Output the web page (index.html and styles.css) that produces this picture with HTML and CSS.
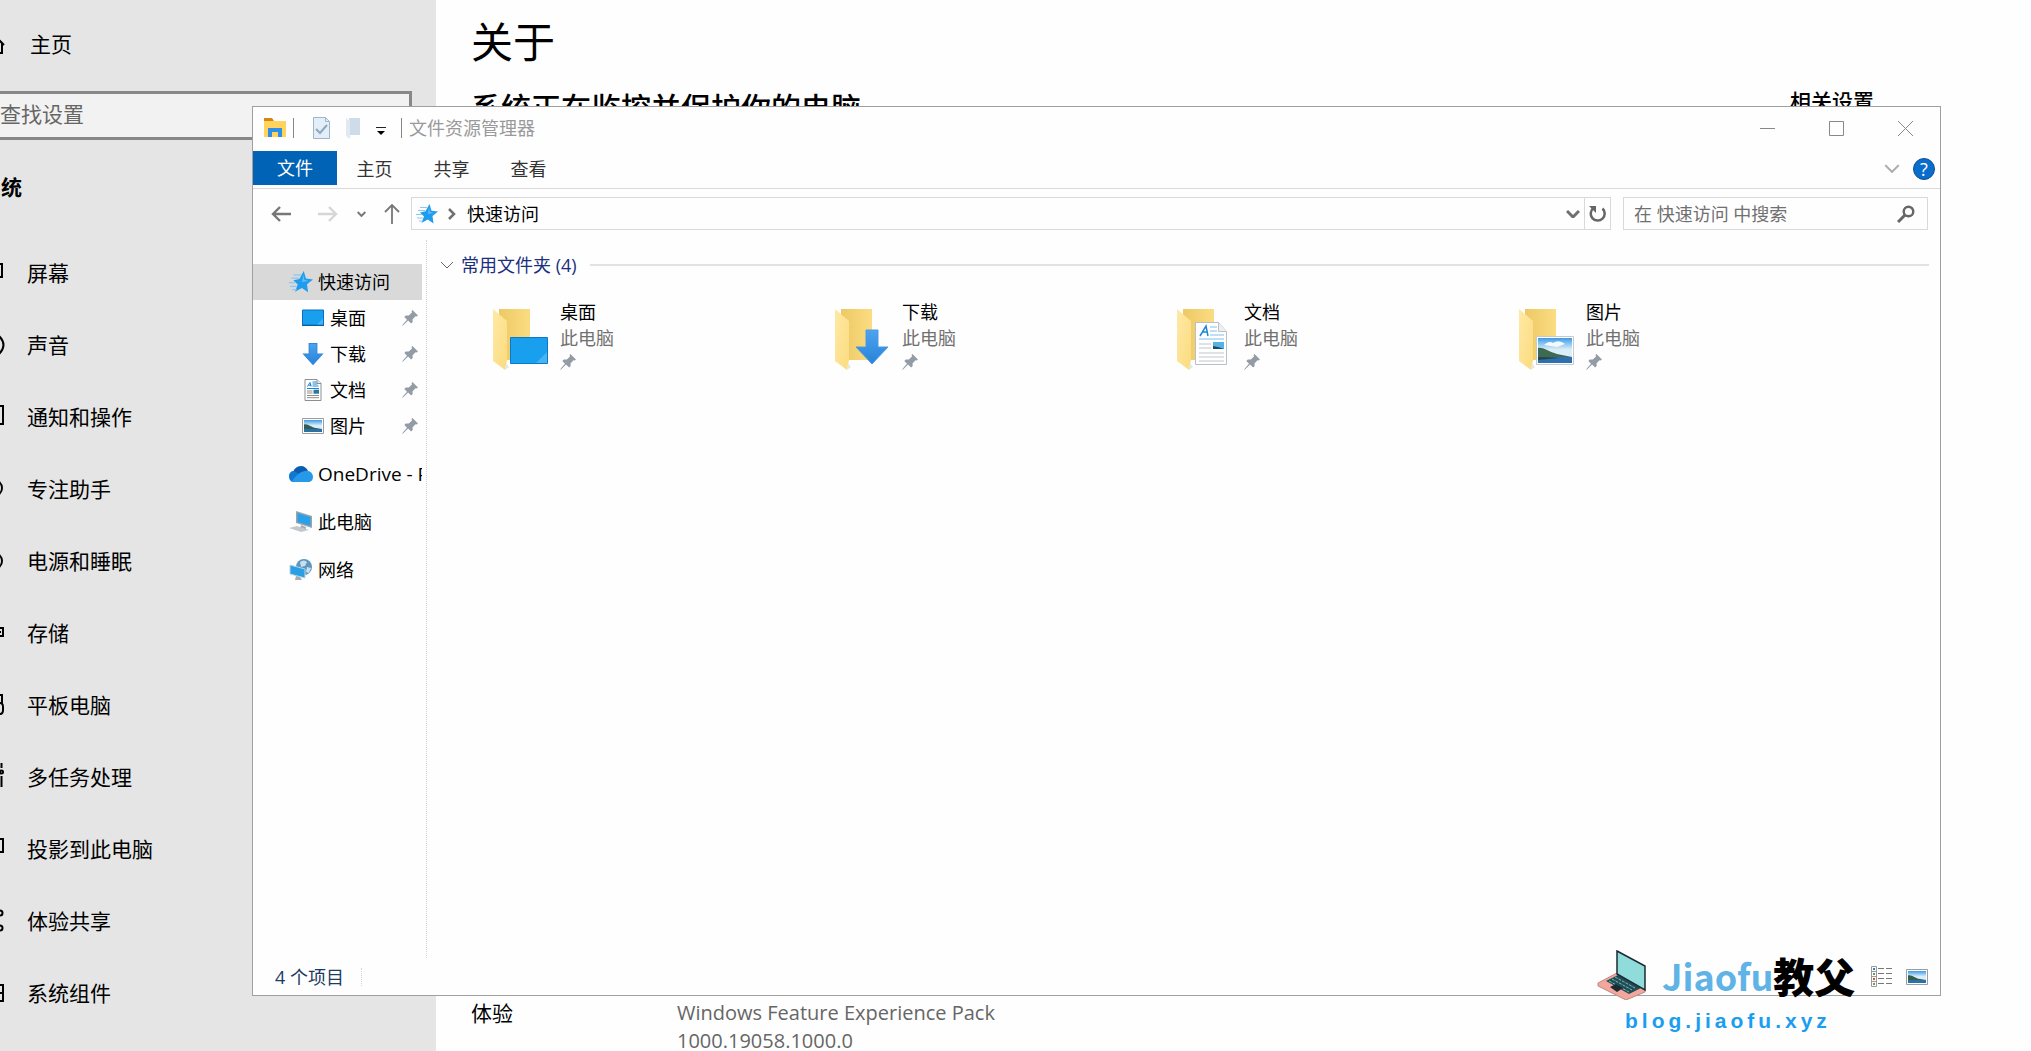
FILE: index.html
```html
<!DOCTYPE html>
<html lang="zh-CN">
<head>
<meta charset="utf-8">
<title>文件资源管理器</title>
<link rel="stylesheet" href="styles.css">
</head>
<body>
<svg class="sprite" aria-hidden="true">
  <defs>
    <linearGradient id="sky" x1="0" y1="0" x2="0" y2="1"><stop offset="0" stop-color="#3d9be6"/><stop offset=".45" stop-color="#d8ecf8"/><stop offset="1" stop-color="#e8f3fa"/></linearGradient>
    <linearGradient id="arrow" x1="0" y1="0" x2="0" y2="1"><stop offset="0" stop-color="#4ba3f0"/><stop offset="1" stop-color="#2a82da"/></linearGradient>
    <linearGradient id="fold" x1="0" y1="0" x2="1" y2="1"><stop offset="0" stop-color="#ffe9a6"/><stop offset="1" stop-color="#fbdb7e"/></linearGradient>
    <linearGradient id="foldback" x1="0" y1="0" x2="1" y2="0"><stop offset="0" stop-color="#edc964"/><stop offset="1" stop-color="#fbdc82"/></linearGradient>
  </defs>
  <symbol id="pin" viewBox="0 0 16 16"><path d="M10.500 0 16 5.500l-1.500 1-1-.3-3 3.200.2 2.600-1.600 1.600-3-3L1.500 15 0 16l1-1.800 4-4.400L2.300 7l1.500-1.500 3 .1L10 2.600 9.600 1z" fill="#939ca5"/></symbol>
  <symbol id="star" viewBox="0 0 22 20"><path d="M13.500 0 15.500 6.800 22 7.600 16.500 12 17.500 19.500 11.800 15.400 5.500 19 8 12.400 4 8.500 9.500 7.200z" fill="#1e9cee"/><path d="M4 3.500h7M2 6.500h7M0 10.500h6M1 14h6M3 17h4" stroke="#8cc8f1" stroke-width="1.200"/><path d="m13 3 1 5 4 1-6 1z" fill="#5fbdf8"/></symbol>
  <symbol id="desktop" viewBox="0 0 22 17"><path d="M.5.5h21v15H.5z" fill="#18a0ee" stroke="#0b6fc0"/><path d="M15 15 21 9v6z" fill="#45b3f2"/><path d="M0 16h22" stroke="#0a5ea8"/></symbol>
  <symbol id="down" viewBox="0 0 18 20"><path d="M5.500.5h7v9.500h5L9 19.500.5 10h5z" fill="url(#arrow)" stroke="#2f86da"/></symbol>
  <symbol id="doc" viewBox="0 0 17 22"><path d="M.5.5h12l4 4v17H.5z" fill="#fff" stroke="#8b9095"/><path d="M12.500.5v4h4" fill="#e6e9ec" stroke="#8b9095"/><path d="m3 7.500 2.500-4 1 4M4 6.200h3M8 3h4M8 5h5M8 7h6M2.500 9.500h12" stroke="#1b86d4" fill="none"/><path d="M2.500 12h5.500M2.500 14h5.500M2.500 16.500h12M2.500 18.700h12" stroke="#8d8f86"/><path d="M9 10.700h5.500v4H9z" fill="#2c75a0"/></symbol>
  <symbol id="photo" viewBox="0 0 22 16"><path d="M.5.5h21v15H.5z" fill="#fff" stroke="#9a9da1"/><path d="M2 2h18v12H2z" fill="url(#sky)"/><path d="M2 6.500c4-1 7 3 12 3.500l6 1H2z" fill="#365c50"/><path d="M2 11h18v3H2z" fill="#2c70a8"/></symbol>
  <symbol id="folder" viewBox="0 0 56 62"><path d="M6 0h31v51H6z" fill="url(#foldback)"/><path d="M0 0 14 12v39l-2 10L0 52z" fill="url(#fold)"/><path d="m12 61 4-3-3-4z" fill="#e6e6e6"/></symbol>
  <symbol id="chev" viewBox="0 0 14 8"><path d="m1 1 6 6 6-6" fill="none" stroke="currentColor" vector-effect="non-scaling-stroke"/></symbol>
</svg>

<div class="settings">
  <aside class="side">
    <a class="side-row home" href="#"><svg viewBox="0 0 20 20"><path d="M1 11 10 1l10 10M18 9v10h-5v-7H7v7H3V9"/></svg>主页</a>
    <input class="side-search" type="text" placeholder="查找设置" aria-label="查找设置">
    <h2>系统</h2>
    <nav>
      <a class="side-row" href="#"><svg viewBox="0 0 20 20"><path d="M0 1h18v13H0zM5 18h9"/></svg>屏幕</a>
      <a class="side-row" href="#"><svg viewBox="0 0 20 20"><path d="M1 7h4l5-5v16l-5-5H1zM15 1q9 9 0 18M12 6q3 4 0 8"/></svg>声音</a>
      <a class="side-row" href="#"><svg viewBox="0 0 20 20"><path d="M0-1h19v18H8l-4 3v-3H0z"/></svg>通知和操作</a>
      <a class="side-row" href="#"><svg viewBox="0 0 20 20"><circle cx="10" cy="9" r="8"/></svg>专注助手</a>
      <a class="side-row" href="#"><svg viewBox="0 0 20 20"><circle cx="10" cy="10" r="8"/><path d="M10 4v7"/></svg>电源和睡眠</a>
      <a class="side-row" href="#"><svg viewBox="0 0 20 20"><path d="M0 5h19v8H0zM13 9h4"/></svg>存储</a>
      <a class="side-row" href="#"><svg viewBox="0 0 20 20"><path d="M0 0h18v8M0 0v18h10M13 18V8h3q3 0 3 4v3q0 4-3 4"/></svg>平板电脑</a>
      <a class="side-row" href="#"><svg viewBox="0 0 20 20"><path d="M0 3h13v14H0zM17.500-4v5M17.500 9v11"/><circle cx="17.500" cy="5" r="1.500"/></svg>多任务处理</a>
      <a class="side-row" href="#"><svg viewBox="0 0 20 20"><path d="M0 0h19v13H0zM5 17h8"/></svg>投影到此电脑</a>
      <a class="side-row" href="#"><svg viewBox="0 0 20 20"><circle cx="16" cy="2" r="2.500"/><circle cx="16" cy="17" r="2.500"/><path d="M14 4 5 9l9 6"/></svg>体验共享</a>
      <a class="side-row" href="#"><svg viewBox="0 0 20 20"><path d="M0 2h19v16H0zM8 2v16M8 10h11"/></svg>系统组件</a>
    </nav>
  </aside>
  <main class="about">
    <div class="about-top">
      <div>
        <h1>关于</h1>
        <p class="protect">系统正在监控并保护你的电脑</p>
      </div>
      <h3>相关设置</h3>
    </div>
    <dl class="spec">
      <dt>体验</dt>
      <dd>Windows Feature Experience Pack<br>1000.19058.1000.0</dd>
    </dl>
  </main>
</div>

<section class="explorer" aria-label="文件资源管理器">
  <header class="titlebar">
    <svg class="app-icon" viewBox="0 0 22 20"><path d="M0 0h8l2 3H0z" fill="#d88410"/><path d="M0 3h22v16H0z" fill="#ffd35c"/><path d="M4 19V10h14v9h-4v-5H8v5z" fill="#2e8fe6"/></svg>
    <span class="bar"></span>
    <svg class="quick-doc" viewBox="0 0 17 22"><path d="M.5.5h12l4 4v17H.5z" fill="#e3eef8" stroke="#9fb6c8"/><path d="M12.500.5v4h4" fill="none" stroke="#9fb6c8"/><path d="m3 12 4 4 7-8" fill="none" stroke="#8fa8bd" stroke-width="2"/></svg>
    <svg class="quick-folder" viewBox="0 0 14 22"><path d="M3 1h11v17H3z" fill="#cddce8"/><path d="m0 1 4 3v18l-4-3z" fill="#e0eaf2"/></svg>
    <svg class="quick-more" viewBox="0 0 10 9"><path d="M0 .5h10" stroke="#222"/><path d="M1 4h8L5 8z" fill="#000"/></svg>
    <span class="bar"></span>
    <span class="title">文件资源管理器</span>
    <div class="controls">
      <button type="button" aria-label="最小化"><svg viewBox="0 0 15 15"><path d="M0 7.500h15"/></svg></button>
      <button type="button" aria-label="最大化"><svg viewBox="0 0 15 15"><path d="M.5.5h14v14H.5z"/></svg></button>
      <button type="button" aria-label="关闭"><svg viewBox="0 0 15 15"><path d="m0 0 15 15M15 0 0 15"/></svg></button>
    </div>
  </header>
  <nav class="tabs">
    <button type="button" class="file">文件</button>
    <button type="button">主页</button>
    <button type="button">共享</button>
    <button type="button">查看</button>
    <div class="tabs-end">
      <svg class="chev-wide"><use href="#chev"/></svg>
      <button type="button" class="help" aria-label="帮助">?</button>
    </div>
  </nav>
  <div class="address-row">
    <svg class="go" viewBox="0 0 20 20"><path d="M20 10H2M9 3l-7 7 7 7" stroke-width="2.400"/></svg>
    <svg class="go forward" viewBox="0 0 20 20"><path d="M0 10h18M11 3l7 7-7 7" stroke-width="2.400"/></svg>
    <svg class="recent"><use href="#chev"/></svg>
    <svg class="go up" viewBox="0 0 16 20"><path d="M8 20V1M1 8l7-7 7 7" stroke-width="1.800"/></svg>
    <div class="address">
      <svg class="i-star"><use href="#star"/></svg>
      <svg class="crumb" viewBox="0 0 8 12"><path d="m1 1 5 5-5 5" fill="none" stroke="#707070" stroke-width="2.500"/></svg>
      <span>快速访问</span>
      <svg class="drop"><use href="#chev"/></svg>
      <button type="button" class="refresh" aria-label="刷新"><svg viewBox="0 0 18 18"><path d="M13.500 3.500a7 7 0 1 1-9-.5" fill="none" stroke="#666" stroke-width="2.500"/><path d="M0 1h7v7z" fill="#666"/></svg></button>
    </div>
    <label class="find">
      <input type="text" placeholder="在 快速访问 中搜索" aria-label="在 快速访问 中搜索">
      <svg viewBox="0 0 18 18"><circle cx="11.500" cy="6.500" r="4.800" fill="none" stroke="#666" stroke-width="2.400"/><path d="m8 10-7 7" stroke="#666" stroke-width="3"/></svg>
    </label>
  </div>
  <div class="body">
    <nav class="tree">
      <a class="root on" href="#"><svg class="i-root"><use href="#star"/></svg>快速访问</a>
      <a class="leaf" href="#"><svg class="i-leaf"><use href="#desktop"/></svg>桌面<svg class="i-pin"><use href="#pin"/></svg></a>
      <a class="leaf" href="#"><svg class="i-leaf"><use href="#down"/></svg>下载<svg class="i-pin"><use href="#pin"/></svg></a>
      <a class="leaf" href="#"><svg class="i-leaf"><use href="#doc"/></svg>文档<svg class="i-pin"><use href="#pin"/></svg></a>
      <a class="leaf" href="#"><svg class="i-leaf"><use href="#photo"/></svg>图片<svg class="i-pin"><use href="#pin"/></svg></a>
      <a class="root apart cloud" href="#"><svg class="i-root" viewBox="0 0 24 16"><path d="M4 8C4 3 8 0 12 0c3 0 6 2 7 5l-6 5z" fill="#0a5cb0"/><path d="M5 5c-3 0-5 2-5 5 0 4 2 6 5 6l9-6z" fill="#1178d0"/><path d="M3 15C8 8 14 4 19 5c3 .5 5 3 5 6s-2 5-5 5H5z" fill="#2799ea"/></svg>OneDrive - P</a>
      <a class="root apart" href="#"><svg class="i-root" viewBox="0 0 24 22"><path d="m7 0 16 5v12L7 12z" fill="#9ba4ab"/><path d="m8.500 2 13 4v9l-13-4z" fill="#2ba0ea"/><path d="m12 14 5 2v2h-6z" fill="#a6adb3"/><path d="m0 17 8-2 12 4-8 2z" fill="#c3c8cc"/></svg>此电脑</a>
      <a class="root apart" href="#"><svg class="i-root" viewBox="0 0 22 22"><circle cx="14" cy="8" r="8" fill="#5e96bd"/><path d="M10 3q4-3 7 0l-2 4-4 1zM17 8l4 1-2 5-3-1z" fill="#c7e0ee"/><path d="m0 6 15 4v9L0 15z" fill="#2b9fe6" stroke="#bcd4e2"/><path d="m6 17 4 1 2 3H5z" fill="#a6adb3"/></svg>网络</a>
    </nav>
    <div class="content">
      <h2 class="group"><svg class="i-group"><use href="#chev"/></svg>常用文件夹 (4)</h2>
      <div class="tiles">
        <a class="tile" href="#"><svg class="i-tile" viewBox="0 0 56 62"><use href="#folder" width="56" height="62"/><path d="M17.500 28.500h37v26h-37z" fill="#18a0ee" stroke="#0b78ca"/><path d="m43 54 11-11v11z" fill="#47b3f1"/></svg><span><b>桌面</b><i>此电脑</i><svg class="i-pin"><use href="#pin"/></svg></span></a>
        <a class="tile" href="#"><svg class="i-tile" viewBox="0 0 56 62"><use href="#folder" width="56" height="62"/><path d="M31 21h12v17h10L37 55 21 38h10z" fill="url(#arrow)" stroke="#4b9be4"/></svg><span><b>下载</b><i>此电脑</i><svg class="i-pin"><use href="#pin"/></svg></span></a>
        <a class="tile" href="#"><svg class="i-tile" viewBox="0 0 56 62"><use href="#folder" width="56" height="62"/><path d="M18.500 13.500h23l8 9v33h-31z" fill="#fff" stroke="#b8bfc5"/><path d="M41.500 13.500v9h8" fill="#edf0f2" stroke="#b8bfc5"/><path d="m23 27 6-10 2 10M25 23h5" fill="none" stroke="#1f86d0" stroke-width="1.500"/><path d="M33 18h7M33 22h7M33 26h14M22 30h25" stroke="#7fbfe8"/><path d="M22 35h12M22 39h12M22 44h25M22 48h25M22 52h25" stroke="#bfc7cd"/><path d="M36 33h11v7H36z" fill="#55b2e6"/><path d="M36 37q6 1 11 3H36z" fill="#1c4b5e"/></svg><span><b>文档</b><i>此电脑</i><svg class="i-pin"><use href="#pin"/></svg></span></a>
        <a class="tile" href="#"><svg class="i-tile" viewBox="0 0 56 62"><use href="#folder" width="56" height="62"/><path d="M17.500 27.500h37v28h-37z" fill="#fff" stroke="#c3cad0"/><path d="M19 29h34v25H19z" fill="url(#sky)"/><path d="M25 36q5-5 9-2 6-4 12 1l-8 3z" fill="#f4f9fc"/><path d="M19 39c6-1 11 4 19 6l15 3H19z" fill="#3d6a52"/><path d="M19 48h34v6H19z" fill="#2e6fae"/><path d="M19 48c8 0 14 0 22 1l-22 2z" fill="#27474c"/></svg><span><b>图片</b><i>此电脑</i><svg class="i-pin"><use href="#pin"/></svg></span></a>
      </div>
    </div>
  </div>
  <footer class="status">
    <span class="count">4 个项目</span>
    <div class="views">
      <button type="button" aria-label="详细信息"><svg width="22" height="22" viewBox="0 0 22 22"><path d="M.5.5h5v20h-5zM.5 5.500h5M.5 10.500h5M.5 15.500h5" fill="none" stroke="#9a9a9a"/><path d="M7 2.500h6m2 0h6M7 7.500h6m2 0h6M7 12.500h6m2 0h6M7 17.500h6m2 0h6" stroke="#777"/><path d="M2 2h2v2H2z" fill="#1f86d0"/><path d="M2 7h2v2H2zM2 17h2v2H2z" fill="#5aa05a"/><path d="M2 12h2v2H2z" fill="#d0502a"/></svg></button>
      <button type="button" aria-label="大缩略图"><svg width="22" height="16"><use href="#photo"/></svg></button>
    </div>
  </footer>
</section>

<div class="brand">
  <div class="brand-top">
    <svg viewBox="0 0 50 50"><path d="m1 33 19-10 28 16v3L29 50 1 36z" fill="#f3a79b" stroke="#b98a88"/><path d="m9 31 12-6 23 13-12 6z" fill="#1f4c55"/><path d="m12 31 20 11M15 29l20 11M18 27l20 11" stroke="#79b8b8" stroke-dasharray="3 1"/><path d="m13 37 6-3 7 4-6 4z" fill="#1b2a33"/><path d="m20 1 28 15v24L20 24z" fill="#8fdcda" stroke="#1b2a33" stroke-width="1.500"/></svg>
    <span class="latin">Jiaofu</span><span class="han">教父</span>
  </div>
  <div class="site">blog.jiaofu.xyz</div>
</div>
</body>
</html>
```
FILE: styles.css
```css
* { box-sizing: border-box; }
body {
  margin: 0;
  height: 100vh;
  overflow: hidden;
  background: #fefefe;
  color: #000;
  font-family: "Open Sans", "Noto Sans CJK SC", sans-serif;
  font-size: 18px;
  line-height: 26px;
}
a { color: inherit; text-decoration: none; }
button { border: 0; padding: 0; background: none; font: inherit; color: inherit; }
h1, h2, h3, p, dl, dd { margin: 0; }
svg { flex: none; display: block; }
.sprite { position: absolute; width: 0; height: 0; }

/* Settings page */
.settings { display: flex; height: 100%; }
.side { width: 436px; flex: none; background: #e5e5e5; overflow: hidden; font-size: 21px; }
.side-row { display: flex; align-items: center; gap: 23px; height: 72px; margin-left: -16px; }
.side-row svg { width: 20px; height: 20px; overflow: visible; fill: none; stroke: #000; stroke-width: 2; }
.home { height: 88px; gap: 26px; }
.side-search {
  display: block;
  width: 428px;
  height: 49px;
  margin: 3px 0 0 -16px;
  padding: 0 0 4px 13px;
  border: 3px solid #888;
  background: #f2f2f3;
  font: inherit;
}
.side-search::placeholder { color: #666; opacity: 1; }
.side h2 { margin: 0 0 3px -20px; font-size: 21px; line-height: 94px; font-weight: 700; }
.about { flex: 1; display: flex; flex-direction: column; justify-content: space-between; padding: 12px 36px 0 35px; }
.about-top { display: flex; justify-content: space-between; }
.about h1 { font-size: 42px; line-height: 60px; font-weight: 400; }
.protect { margin-top: 14px; font-size: 30px; line-height: 44px; font-weight: 500; }
.about h3 { width: 205px; margin-top: 76px; font-size: 21px; font-weight: 500; }
.spec { display: flex; font-size: 21px; line-height: 28px; margin-bottom: -4px; }
.spec dt { width: 206px; }
.spec dd { font-size: 20px; color: #666; }

/* Explorer window */
.explorer {
  position: absolute;
  inset: 106px 90px 55px 252px;
  display: flex;
  flex-direction: column;
  background: #fefefe;
  border: 1px solid #a0a0a0;
}
.titlebar { display: flex; align-items: center; height: 44px; padding: 0 0 2px 11px; color: #999; }
.titlebar .bar { width: 1px; height: 20px; background: #888; }
.app-icon { width: 22px; height: 20px; margin-right: 7px; }
.quick-doc { width: 17px; height: 22px; margin: 0 16px 0 19px; }
.quick-folder { width: 14px; height: 22px; }
.quick-more { width: 10px; height: 9px; margin: 6px 15px 0 16px; }
.title { margin-left: 7px; }
.controls { display: flex; gap: 54px; margin-left: auto; padding-right: 27px; }
.controls button { width: 15px; height: 15px; }
.controls svg { width: 15px; height: 15px; fill: none; stroke: #888; }
.tabs { display: flex; height: 38px; border-bottom: 1px solid #d9dadb; color: #333; }
.tabs > button { width: 77px; height: 36px; }
.tabs .file { width: 84px; height: 34px; background: #0063b6; color: #fff; }
.tabs .file + button { margin-left: -1px; }
.tabs-end { display: flex; align-items: center; gap: 13px; margin-left: auto; padding: 0 5px 2px 0; color: #aaa; }
.chev-wide { width: 16px; height: 9px; stroke-width: 2; }
.help { width: 22px; height: 22px; border-radius: 50%; border: 1px solid #0a4f96; background: #0a6ccb; color: #fff; line-height: 20px; }
.address-row { display: flex; align-items: center; height: 51px; padding: 0 12px 2px 18px; }
.go { width: 20px; height: 20px; fill: none; stroke: #777; }
.forward { stroke: #d6d6d6; margin-left: 27px; }
.recent { width: 9px; height: 6px; margin: 0 18px 0 19px; color: #777; stroke-width: 2; }
.up { width: 16px; margin-right: 11px; }
.address { flex: 1; display: flex; align-items: center; height: 33px; padding-left: 4px; border: 1px solid #d9d9d9; }
.i-star { width: 22px; height: 20px; }
.crumb { width: 8px; height: 12px; margin: 0 11px 0 10px; }
.drop { width: 14px; height: 8px; margin: 0 4px 0 auto; color: #707070; stroke-width: 3; }
.refresh { display: flex; align-items: center; justify-content: center; width: 26px; height: 31px; border-left: 1px solid #d9d9d9; }
.refresh svg { width: 18px; height: 18px; }
.find { display: flex; align-items: center; width: 305px; height: 33px; margin-left: 12px; padding: 0 12px 0 10px; border: 1px solid #d9d9d9; }
.find input { flex: 1; min-width: 0; border: 0; padding: 0; outline: 0; background: none; font: inherit; }
.find input::placeholder { color: #707070; opacity: 1; }
.find svg { width: 18px; height: 18px; }
.body { flex: 1; display: flex; min-height: 0; }
.tree { width: 174px; flex: none; padding: 24px 4px 0 0; border-right: 1px dotted #d4d4d4; }
.tree a { display: flex; align-items: center; height: 36px; white-space: nowrap; overflow: hidden; }
.tree .root { padding-left: 36px; gap: 5px; }
.tree .leaf { padding: 0 4px 0 49px; gap: 6px; }
.tree .apart { margin-top: 12px; }
.tree .cloud { font-size: 19px; }
.tree .on { background: #d9d9d9; }
.i-root { width: 24px; height: 22px; }
.i-leaf { width: 22px; height: 22px; }
.i-pin { width: 16px; height: 16px; }
.leaf .i-pin { margin-left: auto; }
.content { flex: 1; padding: 12px 11px 0 13px; }
.group { display: flex; align-items: center; font-size: 18px; font-weight: 400; color: #1b2f80; }
.group::after { content: ""; flex: 1; height: 2px; margin-left: 13px; background: #e2e2e2; }
.i-group { width: 14px; height: 8px; margin-right: 7px; color: #666; }
.tiles { display: grid; grid-template-columns: repeat(auto-fill, 342px); padding: 21px 0 0 53px; }
.tile { display: flex; gap: 11px; }
.i-tile { width: 56px; height: 62px; margin-top: 10px; }
.tile b, .tile i { display: block; font-weight: 400; font-style: normal; line-height: 26px; }
.tile i { color: #707070; }
.tile .i-pin { margin-top: 3px; }
.status { display: flex; align-items: center; height: 37px; padding: 0 12px 0 22px; color: #1d3a5f; }
.count { padding-right: 17px; border-right: 1px dotted #d4d4d4; line-height: 18px; }
.views { display: flex; align-items: center; gap: 13px; margin-left: auto; }

/* Brand mark over the window corner */
.brand { position: absolute; right: 174px; bottom: 14px; width: 260px; white-space: nowrap; }
.brand-top { display: flex; align-items: center; height: 60px; font-family: "Noto Sans CJK SC", sans-serif; line-height: 60px; }
.brand-top svg { width: 50px; height: 50px; margin-right: 15px; }
.latin { font-size: 36px; font-weight: 700; color: #5fb3e6; }
.han { font-size: 41px; font-weight: 900; }
.site { padding-left: 28px; font-family: "Liberation Sans", sans-serif; font-weight: 700; font-size: 21px; line-height: 32px; letter-spacing: 4px; color: #1b9df0; }
```
